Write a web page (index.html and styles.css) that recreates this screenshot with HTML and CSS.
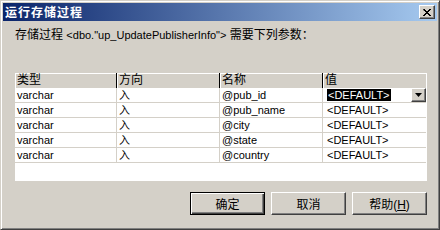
FILE: index.html
```html
<!DOCTYPE html>
<html lang="zh-CN">
<head>
<meta charset="utf-8">
<title>运行存储过程</title>
<link rel="stylesheet" href="styles.css">
</head>
<body>
<div class="window">
  <div class="titlebar">
    <span class="title">运行存储过程</span>
    <span class="close"><svg width="8" height="7" viewBox="0 0 8 7"><path d="M0 0h2v1h1v1h2v-1h1v-1h2v1h-1v1h-1v1h-1v1h1v1h1v1h1v1h-2v-1h-1v-1h-2v1h-1v1h-2v-1h1v-1h1v-1h1v-1h-1v-1h-1z" fill="#000"/></svg></span>
  </div>
  <div class="body">
    <p class="prompt">存储过程 <span class="latin">&lt;dbo."up_UpdatePublisherInfo"&gt;</span> 需要下列参数：</p>
    <div class="grid">
      <div class="row head">
        <div class="cell">类型</div><div class="cell">方向</div><div class="cell">名称</div><div class="cell">值</div>
      </div>
      <div class="row">
        <div class="cell">varchar</div><div class="cell">入</div><div class="cell">@pub_id</div><div class="cell value"><span class="sel">&lt;DEFAULT&gt;</span><span class="drop"><svg width="7" height="4" viewBox="0 0 7 4"><path d="M0 0h7l-3.5 4z" fill="#000"/></svg></span></div>
      </div>
      <div class="row">
        <div class="cell">varchar</div><div class="cell">入</div><div class="cell">@pub_name</div><div class="cell value">&lt;DEFAULT&gt;</div>
      </div>
      <div class="row">
        <div class="cell">varchar</div><div class="cell">入</div><div class="cell">@city</div><div class="cell value">&lt;DEFAULT&gt;</div>
      </div>
      <div class="row">
        <div class="cell">varchar</div><div class="cell">入</div><div class="cell">@state</div><div class="cell value">&lt;DEFAULT&gt;</div>
      </div>
      <div class="row">
        <div class="cell">varchar</div><div class="cell">入</div><div class="cell">@country</div><div class="cell value">&lt;DEFAULT&gt;</div>
      </div>
    </div>
    <div class="buttons">
      <button class="btn default">确定</button>
      <button class="btn">取消</button>
      <button class="btn">帮助(<u>H</u>)</button>
    </div>
  </div>
</div>
</body>
</html>
```
FILE: styles.css
```css
* { box-sizing: border-box; }
html, body { margin: 0; padding: 0; }
body {
  width: 440px;
  height: 230px;
  overflow: hidden;
  background: #d4d0c8;
  font-family: "Liberation Sans", "Noto Sans CJK SC", sans-serif;
  font-size: 11px;
  color: #000;
}
.window {
  width: 440px;
  height: 230px;
  background: #d4d0c8;
  border: 1px solid;
  border-color: #d4d0c8 #404040 #404040 #d4d0c8;
  box-shadow: inset 1px 1px 0 #fff, inset -1px -1px 0 #808080;
  padding: 2px;
  display: flex;
  flex-direction: column;
}
.titlebar {
  height: 18px;
  background: linear-gradient(to right, #0a246a, #a6caf0);
  display: flex;
  align-items: center;
  justify-content: space-between;
  padding: 0 2px;
}
.title {
  color: #fff;
  font-weight: bold;
  font-size: 12px;
  letter-spacing: 1px;
  font-family: "Noto Sans CJK SC", sans-serif;
  line-height: 18px;
}
.close {
  width: 16px;
  height: 14px;
  background: #d4d0c8;
  border: 1px solid;
  border-color: #fff #404040 #404040 #fff;
  box-shadow: inset -1px -1px 0 #808080;
  display: flex;
  align-items: center;
  justify-content: center;
  padding-right: 1px;
}
.close svg { display: block; }
.body {
  flex: 1;
  padding: 7px 10px 0 12px;
  display: flex;
  flex-direction: column;
}
.prompt {
  margin: 0;
  font-size: 12px;
  line-height: 14px;
  font-family: "Liberation Sans", "Noto Sans CJK SC", sans-serif;
}
.prompt .latin { font-size: 11px; }
.grid {
  margin-top: 31px;
  height: 108px;
  background: #fff;
  display: flex;
  flex-direction: column;
}
.row {
  display: grid;
  grid-template-columns: 102px 103px 103px 103px;
  height: 15px;
}
.cell {
  border-right: 1px solid #d4d0c8;
  border-bottom: 1px solid #d4d0c8;
  padding-left: 2px;
  line-height: 14px;
  white-space: nowrap;
  overflow: hidden;
}
.row .cell:last-child { border-right: none; }
.head .cell {
  background: #d4d0c8;
  font-size: 12px;
  border-right: 1px solid #000;
  border-bottom: none;
  box-shadow: inset 1px 1px 0 #fff;
  line-height: 15px;
}
.head .cell:last-child { border-right: none; }
.value { position: relative; padding-left: 4px; }
.sel {
  background: #000;
  color: #fff;
  padding: 0 1px;
  display: inline-block;
  line-height: 12px;
  margin-top: 1px;
}
.drop {
  position: absolute;
  right: 0;
  top: 0;
  width: 15px;
  height: 14px;
  background: #d4d0c8;
  border: 1px solid;
  border-color: #fff #404040 #404040 #fff;
  box-shadow: inset -1px -1px 0 #808080;
  display: flex;
  align-items: center;
  justify-content: center;
}
.drop svg { display: block; }
.buttons {
  margin-top: 11px;
  display: flex;
  justify-content: flex-end;
  gap: 6px;
}
.btn {
  width: 75px;
  height: 23px;
  margin: 0;
  padding: 0;
  background: #d4d0c8;
  font-family: "Liberation Sans", "Noto Sans CJK SC", sans-serif;
  font-size: 12px;
  color: #000;
  border: 1px solid;
  border-color: #fff #404040 #404040 #fff;
  box-shadow: inset -1px -1px 0 #808080;
}
.btn.default {
  border: 1px solid #000;
  box-shadow: inset 1px 1px 0 #fff, inset -1px -1px 0 #404040, inset -2px -2px 0 #808080;
}
.btn u { text-decoration: underline; }
```
